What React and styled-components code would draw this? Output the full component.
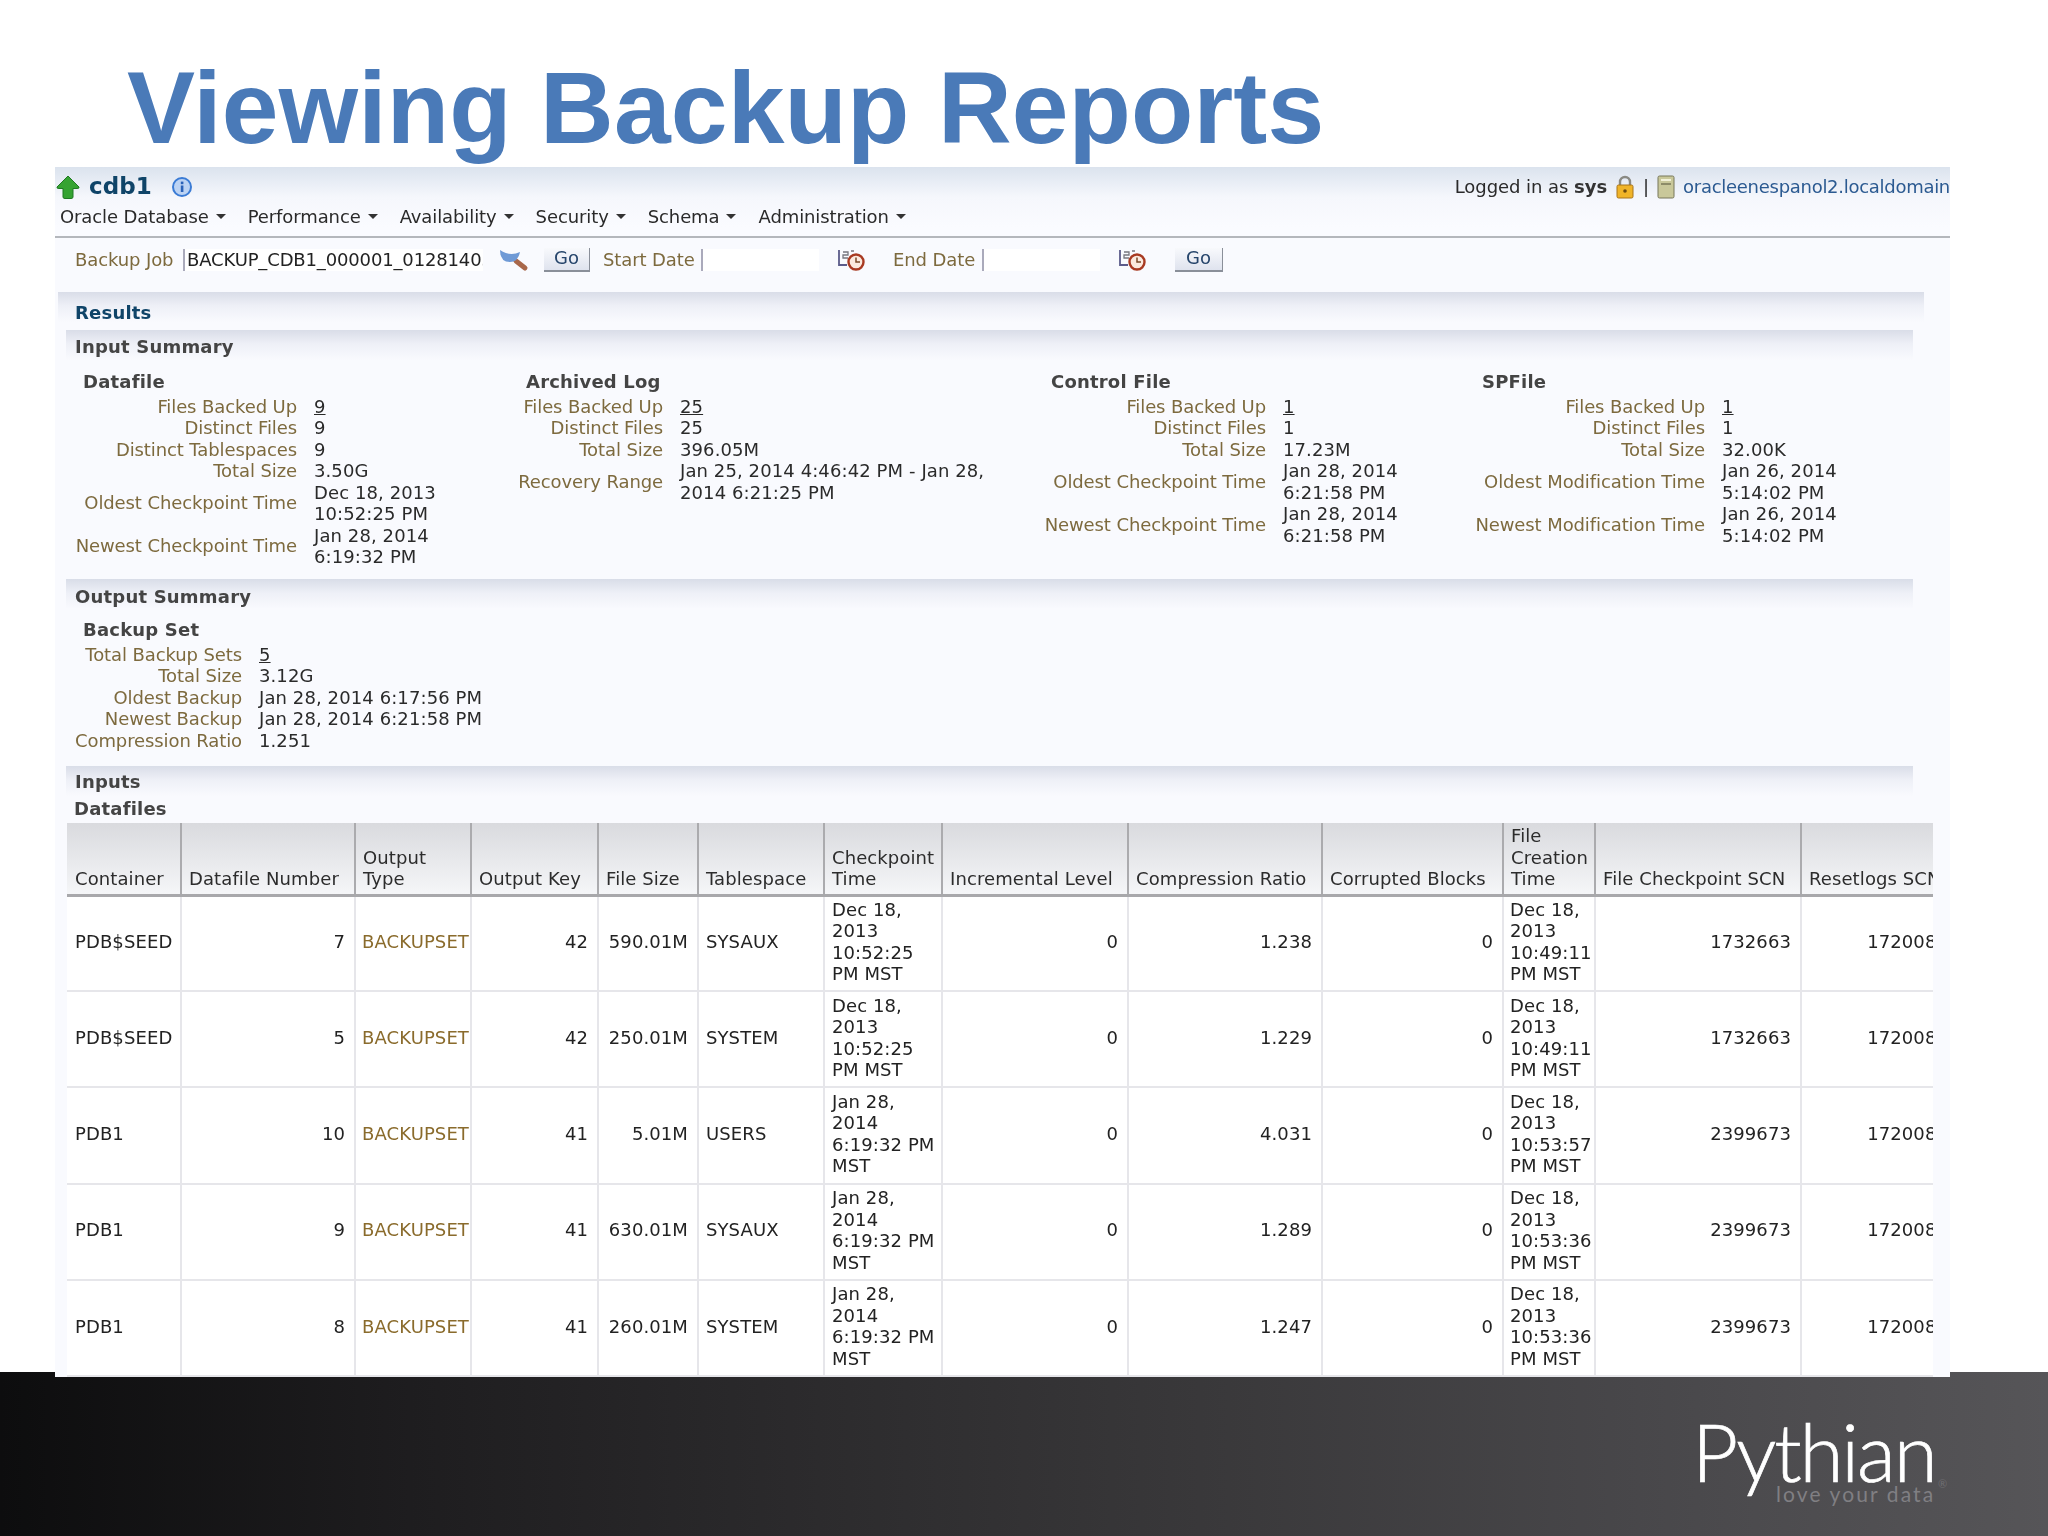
import React from "react";
import styled, { createGlobalStyle } from "styled-components";

const GlobalStyle = createGlobalStyle`
  html, body { margin: 0; padding: 0; background: #fff; }
  * { box-sizing: border-box; }
`;

const Slide = styled.div`
  width: 2048px;
  height: 1536px;
  overflow: hidden;
  display: flex;
  flex-direction: column;
  font-family: "DejaVu Sans", sans-serif;
`;

const Title = styled.h1`
  margin: 0;
  height: 167px;
  padding: 52px 0 0 127px;
  font: bold 102px/112px "Liberation Sans", Arial, sans-serif;
  letter-spacing: 0.15px;
  color: #4a7ab8;
`;

const Panel = styled.div`
  position: relative;
  z-index: 1;
  width: 1895px;
  height: 1210px;
  margin-left: 55px;
  flex: none;
  overflow: hidden;
  background: #f9fafe;
  font-size: 18px;
  line-height: 21.5px;
  letter-spacing: 0.1px;
  color: #2a2a2a;
  filter: blur(0.45px);
`;

const TopBar = styled.div`
  height: 71px;
  border-bottom: 2px solid #b4b7bc;
  background: linear-gradient(#dbe3ee 0, #f5f7fc 30px, #fafbff 60px);
`;

const BrandRow = styled.div`
  height: 39px;
  display: flex;
  align-items: center;
  justify-content: space-between;
  padding-top: 1px;
`;

const Brand = styled.div`
  display: flex;
  align-items: center;
`;

const BrandName = styled.span`
  margin: 0 19px 0 8px;
  font-size: 23px;
  font-weight: bold;
  color: #0f4468;
`;

const UserInfo = styled.div`
  display: flex;
  align-items: center;
  gap: 7px;
  white-space: nowrap;
  letter-spacing: -0.05px;
  b { color: #333; }
`;

const HostLink = styled.span`
  letter-spacing: -0.28px;
  color: #2b5a91;
`;

const Menu = styled.div`
  display: flex;
  gap: 22px;
  padding-left: 5px;
  height: 21px;
  align-items: center;
  letter-spacing: -0.1px;
`;

const MenuItem = styled.span`
  display: flex;
  align-items: center;
  gap: 7px;
  white-space: nowrap;
  &::after {
    content: "";
    border-left: 5px solid transparent;
    border-right: 5px solid transparent;
    border-top: 5px solid #333;
  }
`;

const SearchBar = styled.div`
  height: 54px;
  display: flex;
  align-items: center;
  padding: 0 0 11px 20px;
`;

const FieldLabel = styled.span`
  flex: none;
  width: ${(p) => p.$w}px;
  margin-left: ${(p) => p.$before || 0}px;
  letter-spacing: -0.1px;
  color: #7d6a3e;
  white-space: nowrap;
`;

const FieldInput = styled.span`
  flex: none;
  width: ${(p) => p.$w}px;
  height: 22px;
  margin-right: ${(p) => p.$after}px;
  padding-left: 2px;
  border-left: 2px solid #aab;
  overflow: hidden;
  white-space: nowrap;
  background: #fff;
  line-height: 22px;
  letter-spacing: -0.15px;
  color: #222;
`;

const GoButton = styled.span`
  flex: none;
  width: ${(p) => p.$w || 46}px;
  height: 24px;
  margin: 0 ${(p) => p.$after}px 0 ${(p) => p.$before}px;
  text-align: center;
  line-height: 20px;
  color: #26456b;
  background: linear-gradient(#f8f9fc, #dfe3ee);
  border-right: 1px solid #8a8f99;
  border-bottom: 2px solid #8a8f99;
`;

const Band = styled.div`
  height: ${(p) => p.$h}px;
  padding: ${(p) => p.$top}px 0 0 ${(p) => p.$left}px;
  margin: 0 ${(p) => p.$right}px 0 ${(p) => p.$margin}px;
  background: linear-gradient(#d9dde8 0, #eef0f7 14px, #f9fafe 30px);
  font-weight: bold;
  letter-spacing: 0.2px;
  color: ${(p) => p.$color || "#444"};
`;

const SummaryRow = styled.div`
  display: flex;
  align-items: flex-start;
  padding: ${(p) => p.$top || 0}px 0 0 20px;
  height: ${(p) => p.$h}px;
`;

const Group = styled.div`
  flex: none;
  width: ${(p) => p.$w}px;
`;

const GroupTitle = styled.div`
  padding-left: 8px;
  margin-bottom: 3px;
  font-weight: bold;
  letter-spacing: 0.2px;
  color: #444;
`;

const Facts = styled.div`
  display: grid;
  grid-template-columns: ${(p) => p.$label}px auto;
  column-gap: 17px;
  align-items: center;
  justify-content: start;
`;

const FactLabel = styled.div`
  text-align: right;
  white-space: nowrap;
  letter-spacing: -0.1px;
  color: #7d6a3e;
`;

const FactValue = styled.div`
  white-space: pre;
  color: #2a2a2a;
  text-decoration: ${(p) => (p.$link ? "underline" : "none")};
`;

const SubTitle = styled.div`
  margin: 0 0 ${(p) => p.$after}px ${(p) => p.$left}px;
  font-weight: bold;
  letter-spacing: 0.2px;
  color: #444;
`;

const TableClip = styled.div`
  width: 1866px;
  margin-left: 12px;
  overflow: hidden;
`;

const Table = styled.table`
  table-layout: fixed;
  width: 1890px;
  border-collapse: collapse;
`;

const Head = styled.th`
  height: 72px;
  padding: 0 0 4px 7px;
  vertical-align: bottom;
  text-align: left;
  font-weight: normal;
  white-space: pre;
  overflow: hidden;
  color: #2c2c2c;
  background: linear-gradient(#d9dade, #f5f6f8);
  border-left: 2px solid #ababae;
  border-bottom: 3px solid #a8a8ab;
  &:first-child { border-left: 0; padding-left: 8px; }
`;

const Cell = styled.td`
  height: 96.2px;
  padding: 0 ${(p) => (p.$num ? 9 : 0)}px 3px ${(p) => p.$left || 7}px;
  vertical-align: middle;
  background: #fff;
  text-align: ${(p) => (p.$num ? "right" : "left")};
  white-space: pre;
  overflow: hidden;
  color: ${(p) => (p.$tan ? "#8a6b2c" : "#222")};
  border-left: 2px solid #e6e6ea;
  border-bottom: 2px solid #e6e6ea;
  &:first-child { border-left: 0; padding-left: 8px; }
`;

const Footer = styled.div`
  flex: none;
  height: 164px;
  margin-top: -5px;
  padding: 40px 0 0 1692px;
  background: linear-gradient(90deg, #0d0d0e 0, #1e1d1f 20%, #2c2b2d 40%, #3a393b 60%, #48474a 80%, #565558 100%);
`;

const Logo = styled.div`
  position: relative;
  width: 250px;
`;

const LogoName = styled.div`
  font: 300 80px/78px Lato, sans-serif;
  color: #fff;
  letter-spacing: -2.1px;
  -webkit-text-stroke: 0.7px #fff;
`;

const LogoTag = styled.div`
  margin: -8px 0 0 84px;
  font: 400 21px/24px Lato, sans-serif;
  letter-spacing: 2.1px;
  color: #807f83;
  white-space: nowrap;
`;

const LogoMark = styled.span`
  position: absolute;
  left: 246px;
  top: 66px;
  font: 11px/12px Lato, sans-serif;
  color: #6f6e72;
`;

const HomeIcon = () => (
  <svg width="26" height="26" viewBox="0 0 26 26">
    <path d="M13 2 L24 13 Q24.5 14.5 22 14.5 L18 14.5 L18 23 Q18 24.5 16 24.5 L10 24.5 Q8 24.5 8 23 L8 14.5 L4 14.5 Q1.5 14.5 2 13 Z" fill="#35a332" stroke="#1f7a22" strokeWidth="1" />
  </svg>
);

const InfoIcon = () => (
  <svg width="22" height="22" viewBox="0 0 22 22">
    <circle cx="11" cy="11" r="9" fill="#bcd3f3" stroke="#3a7bd5" strokeWidth="2" />
    <rect x="9.8" y="9.5" width="2.6" height="6.5" fill="#2a62b8" />
    <rect x="9.8" y="5.6" width="2.6" height="2.6" fill="#2a62b8" />
  </svg>
);

const LockIcon = () => (
  <svg width="22" height="24" viewBox="0 0 22 24">
    <path d="M6 11 V7 a5 5 0 0 1 10 0 V11" fill="none" stroke="#8a8a84" strokeWidth="2.4" />
    <rect x="3" y="10" width="16" height="13" rx="1.5" fill="#f0b429" stroke="#a8741a" />
    <circle cx="11" cy="16" r="1.8" fill="#6b4a10" />
  </svg>
);

const ServerIcon = () => (
  <svg width="20" height="24" viewBox="0 0 20 24">
    <rect x="2" y="1" width="16" height="22" rx="1.5" fill="#c9c89a" stroke="#77775a" />
    <rect x="5" y="4" width="10" height="2" fill="#f2f1d8" />
    <rect x="5" y="8" width="10" height="2" fill="#8d8c68" />
  </svg>
);

const SearchIcon = () => (
  <svg width="30" height="24" viewBox="0 0 30 24">
    <path d="M17 13 L26 20" stroke="#a8674a" strokeWidth="5" strokeLinecap="round" />
    <path d="M1 2 Q1 14 11 14 Q19 14 21 4 Q11 9 1 2 Z" fill="#6f9ad6" />
  </svg>
);

const CalendarClockIcon = () => (
  <svg width="32" height="24" viewBox="0 0 32 24">
    <path d="M3 2 V17 H11" fill="none" stroke="#5b5b8a" strokeWidth="1.8" />
    <path d="M7 4 H12 V7 H7 V10 H12 M15 3 L18 3" fill="none" stroke="#77777f" strokeWidth="1.3" />
    <circle cx="20" cy="14" r="7.5" fill="#fbeadf" stroke="#a83a22" strokeWidth="2.4" />
    <path d="M20 9.5 V14 H24" fill="none" stroke="#7a4a2a" strokeWidth="1.5" />
  </svg>
);

const groups = [
  {
    title: "Datafile", w: 443, label: 222,
    facts: [
      ["Files Backed Up", "9", true],
      ["Distinct Files", "9"],
      ["Distinct Tablespaces", "9"],
      ["Total Size", "3.50G"],
      ["Oldest Checkpoint Time", "Dec 18, 2013\n10:52:25 PM"],
      ["Newest Checkpoint Time", "Jan 28, 2014\n6:19:32 PM"],
    ],
  },
  {
    title: "Archived Log", w: 525, label: 145,
    facts: [
      ["Files Backed Up", "25", true],
      ["Distinct Files", "25"],
      ["Total Size", "396.05M"],
      ["Recovery Range", "Jan 25, 2014 4:46:42 PM - Jan 28,\n2014 6:21:25 PM"],
    ],
  },
  {
    title: "Control File", w: 431, label: 223,
    facts: [
      ["Files Backed Up", "1", true],
      ["Distinct Files", "1"],
      ["Total Size", "17.23M"],
      ["Oldest Checkpoint Time", "Jan 28, 2014\n6:21:58 PM"],
      ["Newest Checkpoint Time", "Jan 28, 2014\n6:21:58 PM"],
    ],
  },
  {
    title: "SPFile", w: 420, label: 231,
    facts: [
      ["Files Backed Up", "1", true],
      ["Distinct Files", "1"],
      ["Total Size", "32.00K"],
      ["Oldest Modification Time", "Jan 26, 2014\n5:14:02 PM"],
      ["Newest Modification Time", "Jan 26, 2014\n5:14:02 PM"],
    ],
  },
];

const backupSet = [
  ["Total Backup Sets", "5", true],
  ["Total Size", "3.12G"],
  ["Oldest Backup", "Jan 28, 2014 6:17:56 PM"],
  ["Newest Backup", "Jan 28, 2014 6:21:58 PM"],
  ["Compression Ratio", "1.251"],
];

const columns = [
  ["Container", 114], ["Datafile Number", 174], ["Output\nType", 116], ["Output Key", 127],
  ["File Size", 100], ["Tablespace", 126], ["Checkpoint\nTime", 118], ["Incremental Level", 186],
  ["Compression Ratio", 194], ["Corrupted Blocks", 181], ["File\nCreation\nTime", 92],
  ["File Checkpoint SCN", 206], ["Resetlogs SCN", 156],
];

const rows = [
  ["PDB$SEED", 7, 42, "590.01M", "SYSAUX", "Dec 18,\n2013\n10:52:25\nPM MST", "1.238", "Dec 18,\n2013\n10:49:11\nPM MST", 1732663],
  ["PDB$SEED", 5, 42, "250.01M", "SYSTEM", "Dec 18,\n2013\n10:52:25\nPM MST", "1.229", "Dec 18,\n2013\n10:49:11\nPM MST", 1732663],
  ["PDB1", 10, 41, "5.01M", "USERS", "Jan 28,\n2014\n6:19:32 PM\nMST", "4.031", "Dec 18,\n2013\n10:53:57\nPM MST", 2399673],
  ["PDB1", 9, 41, "630.01M", "SYSAUX", "Jan 28,\n2014\n6:19:32 PM\nMST", "1.289", "Dec 18,\n2013\n10:53:36\nPM MST", 2399673],
  ["PDB1", 8, 41, "260.01M", "SYSTEM", "Jan 28,\n2014\n6:19:32 PM\nMST", "1.247", "Dec 18,\n2013\n10:53:36\nPM MST", 2399673],
];

const menuItems = ["Oracle Database", "Performance", "Availability", "Security", "Schema", "Administration"];

function FactList({ facts, label }) {
  return (
    <Facts $label={label}>
      {facts.map(([name, value, link]) => (
        <React.Fragment key={name}>
          <FactLabel>{name}</FactLabel>
          <FactValue $link={link}>{value}</FactValue>
        </React.Fragment>
      ))}
    </Facts>
  );
}

export default function App() {
  return (
    <Slide>
      <GlobalStyle />
      <Title>Viewing Backup Reports</Title>
      <Panel>
        <TopBar>
          <BrandRow>
            <Brand>
              <HomeIcon />
              <BrandName>cdb1</BrandName>
              <InfoIcon />
            </Brand>
            <UserInfo>
              <span>Logged in as <b>sys</b></span>
              <LockIcon />
              <span>|</span>
              <ServerIcon />
              <HostLink>oracleenespanol2.localdomain</HostLink>
            </UserInfo>
          </BrandRow>
          <Menu>
            {menuItems.map((item) => <MenuItem key={item}>{item}</MenuItem>)}
          </Menu>
        </TopBar>
        <SearchBar>
          <FieldLabel $w={108}>Backup Job</FieldLabel>
          <FieldInput $w={300} $after={16}>BACKUP_CDB1_000001_012814052</FieldInput>
          <SearchIcon />
          <GoButton $before={15} $after={13}>Go</GoButton>
          <FieldLabel $w={98}>Start Date</FieldLabel>
          <FieldInput $w={118} $after={17}></FieldInput>
          <CalendarClockIcon />
          <FieldLabel $w={89} $before={25}>End Date</FieldLabel>
          <FieldInput $w={118} $after={17}></FieldInput>
          <CalendarClockIcon />
          <GoButton $before={26} $after={0} $w={48}>Go</GoButton>
        </SearchBar>
        <Band $h={38} $top={10} $left={17} $margin={3} $right={26} $color="#0f4468">Results</Band>
        <Band $h={40} $top={6} $left={9} $margin={11} $right={37}>Input Summary</Band>
        <SummaryRow $top={1} $h={209}>
          {groups.map((g) => (
            <Group key={g.title} $w={g.w}>
              <GroupTitle>{g.title}</GroupTitle>
              <FactList facts={g.facts} label={g.label} />
            </Group>
          ))}
        </SummaryRow>
        <Band $h={40} $top={7} $left={9} $margin={11} $right={37}>Output Summary</Band>
        <SubTitle $left={28} $after={3}>Backup Set</SubTitle>
        <SummaryRow $top={0} $h={122}>
          <FactList facts={backupSet} label={167} />
        </SummaryRow>
        <Band $h={32} $top={5} $left={9} $margin={11} $right={37}>Inputs</Band>
        <SubTitle $left={19} $after={4}>Datafiles</SubTitle>
        <TableClip>
          <Table>
            <colgroup>
              {columns.map(([name, w]) => <col key={name} width={w} />)}
            </colgroup>
            <thead>
              <tr>
                {columns.map(([name]) => <Head key={name}>{name}</Head>)}
              </tr>
            </thead>
            <tbody>
              {rows.map((r, i) => (
                <tr key={i}>
                  <Cell>{r[0]}</Cell>
                  <Cell $num>{r[1]}</Cell>
                  <Cell $tan $left={6}>BACKUPSET</Cell>
                  <Cell $num>{r[2]}</Cell>
                  <Cell $num>{r[3]}</Cell>
                  <Cell>{r[4]}</Cell>
                  <Cell>{r[5]}</Cell>
                  <Cell $num>0</Cell>
                  <Cell $num>{r[6]}</Cell>
                  <Cell $num>0</Cell>
                  <Cell $left={6}>{r[7]}</Cell>
                  <Cell $num>{r[8]}</Cell>
                  <Cell $num>1720082</Cell>
                </tr>
              ))}
            </tbody>
          </Table>
        </TableClip>
      </Panel>
      <Footer>
        <Logo>
          <LogoName>Pythian</LogoName>
          <LogoTag>love your data</LogoTag>
          <LogoMark>®</LogoMark>
        </Logo>
      </Footer>
    </Slide>
  );
}
